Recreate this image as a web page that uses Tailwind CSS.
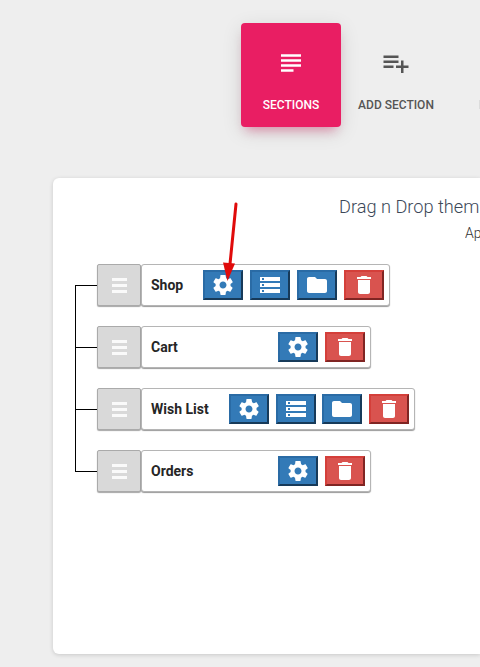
<!DOCTYPE html>
<html lang="en">
<head>
<meta charset="utf-8">
<title>Sections</title>
<script src="https://cdn.jsdelivr.net/npm/@tailwindcss/browser@4"></script>
</head>
<body class="relative h-[667px] w-[480px] overflow-hidden bg-[#eeeeee] font-['Roboto',sans-serif] text-[#262626]">
<svg class="hidden">
  <symbol id="gear" viewBox="0 0 24 24"><path d="M19.500 12.940c.04-.3.060-.610.060-.940 0-.320-.020-.640-.070-.940l2.030-1.580c.18-.14.230-.410.120-.610l-1.920-3.320c-.12-.22-.370-.290-.590-.220l-2.390.960c-.5-.38-1.030-.7-1.620-.94L14.600 2.410c-.04-.24-.240-.410-.480-.410h-4.240c-.24 0-.430.170-.470.410l-.36 2.940c-.59.240-1.130.570-1.620.940l-2.390-.96c-.22-.08-.470 0-.590.220L2.540 8.870c-.12.210-.080.470.120.610l2.030 1.580c-.05.300-.090.630-.090.940s.020.640.070.940l-2.030 1.580c-.18.140-.230.410-.120.610l1.920 3.320c.12.220.370.290.590.220l2.390-.96c.5.380 1.030.700 1.620.940l.36 2.940c.05.240.240.410.480.410h4.240c.24 0 .440-.170.470-.410l.36-2.940c.59-.24 1.130-.56 1.620-.94l2.390.96c.22.080.470 0 .590-.22l1.920-3.320c.12-.22.070-.470-.12-.61l-1.850-1.580zM12 15.500c-1.930 0-3.500-1.570-3.500-3.500s1.570-3.500 3.500-3.500 3.500 1.570 3.500 3.500-1.570 3.500-3.500 3.500z"/></symbol>
  <symbol id="storage" viewBox="0 0 24 24"><path d="M2 20h20v-4H2v4zm2-3h2v2H4v-2zM2 4v4h20V4H2zm4 3H4V5h2v2zm-4 7h20v-4H2v4zm2-3h2v2H4v-2z"/></symbol>
  <symbol id="folder" viewBox="0 0 24 24"><path d="M10 4H4c-1.1 0-1.99.9-1.99 2L2 18c0 1.100.9 2 2 2h16c1.100 0 2-.9 2-2V8c0-1.100-.9-2-2-2h-8l-2-2z"/></symbol>
  <symbol id="trash" viewBox="0 0 24 24"><path d="M6 19c0 1.100.9 2 2 2h8c1.100 0 2-.9 2-2V7H6v12zM19 4h-3.500l-1-1h-5l-1 1H5v2h14V4z"/></symbol>
  <symbol id="bars" viewBox="0 0 15 15"><path d="M0 0h15v3H0zM0 6h15v3H0zM0 12h15v3H0z"/></symbol>
</svg>

<nav class="ml-[241px] flex w-[239px] pt-[23px] text-[12px] leading-[14px] font-medium whitespace-nowrap">
  <div class="flex h-[104px] w-[100px] shrink-0 flex-col items-center rounded-[4px] bg-[#e91e63] pt-[25px] text-white shadow-[0_5px_20px_rgba(0,0,0,0.12),0_8px_10px_-5px_rgba(233,30,99,0.4)]">
    <svg class="h-[30px] w-[30px] fill-current" viewBox="0 0 24 24"><path d="M14 17H4v2h10v-2zm6-8H4v2h16V9zM4 15h16v-2H4v2zM4 5v2h16V5H4z"/></svg>
    <span class="mt-5">SECTIONS</span>
  </div>
  <div class="ml-[5px] flex h-[104px] w-[100px] shrink-0 flex-col items-center pt-[25px] text-[#555]">
    <svg class="h-[30px] w-[30px] fill-current" viewBox="0 0 24 24"><path d="M14 10H2v2h12v-2zm0-4H2v2h12V6zm4 8v-4h-2v4h-4v2h4v4h2v-4h4v-2h-4zM2 16h8v-2H2v2z"/></svg>
    <span class="mt-5">ADD SECTION</span>
  </div>
  <div class="mt-[77px] ml-auto h-[9px] w-px bg-[#dcdcdc]"></div>
</nav>

<main class="mt-[51px] ml-[53px] h-[476px] w-[427px] rounded-l-[6px] bg-white pt-[18px] shadow-[0_1px_4px_rgba(0,0,0,0.16)]">
  <h1 class="ml-[286px] w-[141px] overflow-hidden text-[18.2px] leading-[22px] font-light whitespace-nowrap text-[#3c4858]">Drag n Drop them</h1>
  <p class="mt-[5px] ml-[412px] w-[15px] overflow-hidden text-[14px] leading-[20px] font-light whitespace-nowrap text-[#333]">Ap</p>

  <div class="mt-[21px] ml-[22px] flex">
    <div class="mt-[21px] h-[187px] w-[22px] border-y border-l border-black pt-[61px]">
      <div class="h-[63px] border-y border-black"></div>
    </div>
    <ul class="flex flex-col gap-5 text-[14px] font-bold">
      <li class="flex h-[42px]">
        <span class="flex w-[44px] items-center justify-center rounded-[2px] border border-[#aaa] bg-[#d9d9d9] pt-px shadow-[0_1px_1px_rgba(0,0,0,0.35)]"><svg class="h-[15px] w-[15px] fill-[#fafafa]"><use href="#bars"/></svg></span>
        <div class="flex w-[249px] items-center justify-between rounded-[3px] border border-[#b5b5b5] bg-white pr-[5px] pl-[9px] shadow-[0_1px_1px_rgba(0,0,0,0.4)]">
          <span>Shop</span>
          <div class="flex gap-[7px] fill-white">
            <span class="flex h-[30px] w-10 items-center justify-center border-2 border-t-[#2a6ba5] border-r-[#173a59] border-b-[#173a59] border-l-[#2a6ba5] bg-[#337ab7]"><svg class="h-6 w-6"><use href="#gear"/></svg></span>
            <span class="flex h-[30px] w-10 items-center justify-center border-2 border-t-[#2a6ba5] border-r-[#173a59] border-b-[#173a59] border-l-[#2a6ba5] bg-[#337ab7]"><svg class="h-6 w-6"><use href="#storage"/></svg></span>
            <span class="flex h-[30px] w-10 items-center justify-center border-2 border-t-[#2a6ba5] border-r-[#173a59] border-b-[#173a59] border-l-[#2a6ba5] bg-[#337ab7]"><svg class="h-6 w-6"><use href="#folder"/></svg></span>
            <span class="flex h-[30px] w-10 items-center justify-center border-2 border-t-[#d43f3a] border-r-[#802523] border-b-[#802523] border-l-[#d43f3a] bg-[#d9534f]"><svg class="h-6 w-6"><use href="#trash"/></svg></span>
          </div>
        </div>
      </li>
      <li class="flex h-[42px]">
        <span class="flex w-[44px] items-center justify-center rounded-[2px] border border-[#aaa] bg-[#d9d9d9] pt-px shadow-[0_1px_1px_rgba(0,0,0,0.35)]"><svg class="h-[15px] w-[15px] fill-[#fafafa]"><use href="#bars"/></svg></span>
        <div class="flex w-[230px] items-center justify-between rounded-[3px] border border-[#b5b5b5] bg-white pr-[5px] pl-[9px] shadow-[0_1px_1px_rgba(0,0,0,0.4)]">
          <span>Cart</span>
          <div class="flex gap-[7px] fill-white">
            <span class="flex h-[30px] w-10 items-center justify-center border-2 border-t-[#2a6ba5] border-r-[#173a59] border-b-[#173a59] border-l-[#2a6ba5] bg-[#337ab7]"><svg class="h-6 w-6"><use href="#gear"/></svg></span>
            <span class="flex h-[30px] w-10 items-center justify-center border-2 border-t-[#d43f3a] border-r-[#802523] border-b-[#802523] border-l-[#d43f3a] bg-[#d9534f]"><svg class="h-6 w-6"><use href="#trash"/></svg></span>
          </div>
        </div>
      </li>
      <li class="flex h-[42px]">
        <span class="flex w-[44px] items-center justify-center rounded-[2px] border border-[#aaa] bg-[#d9d9d9] pt-px shadow-[0_1px_1px_rgba(0,0,0,0.35)]"><svg class="h-[15px] w-[15px] fill-[#fafafa]"><use href="#bars"/></svg></span>
        <div class="flex w-[274px] items-center justify-between rounded-[3px] border border-[#b5b5b5] bg-white pr-[5px] pl-[9px] shadow-[0_1px_1px_rgba(0,0,0,0.4)]">
          <span>Wish List</span>
          <div class="flex fill-white">
            <span class="flex h-[30px] w-10 items-center justify-center border-2 border-t-[#2a6ba5] border-r-[#173a59] border-b-[#173a59] border-l-[#2a6ba5] bg-[#337ab7]"><svg class="h-6 w-6"><use href="#gear"/></svg></span>
            <span class="ml-[7px] flex h-[30px] w-10 items-center justify-center border-2 border-t-[#2a6ba5] border-r-[#173a59] border-b-[#173a59] border-l-[#2a6ba5] bg-[#337ab7]"><svg class="h-6 w-6"><use href="#storage"/></svg></span>
            <span class="ml-[6px] flex h-[30px] w-10 items-center justify-center border-2 border-t-[#2a6ba5] border-r-[#173a59] border-b-[#173a59] border-l-[#2a6ba5] bg-[#337ab7]"><svg class="h-6 w-6"><use href="#folder"/></svg></span>
            <span class="ml-[7px] flex h-[30px] w-10 items-center justify-center border-2 border-t-[#d43f3a] border-r-[#802523] border-b-[#802523] border-l-[#d43f3a] bg-[#d9534f]"><svg class="h-6 w-6"><use href="#trash"/></svg></span>
          </div>
        </div>
      </li>
      <li class="flex h-[42px]">
        <span class="flex w-[44px] items-center justify-center rounded-[2px] border border-[#aaa] bg-[#d9d9d9] pt-px shadow-[0_1px_1px_rgba(0,0,0,0.35)]"><svg class="h-[15px] w-[15px] fill-[#fafafa]"><use href="#bars"/></svg></span>
        <div class="flex w-[230px] items-center justify-between rounded-[3px] border border-[#b5b5b5] bg-white pr-[5px] pl-[9px] shadow-[0_1px_1px_rgba(0,0,0,0.4)]">
          <span>Orders</span>
          <div class="flex gap-[7px] fill-white">
            <span class="flex h-[30px] w-10 items-center justify-center border-2 border-t-[#2a6ba5] border-r-[#173a59] border-b-[#173a59] border-l-[#2a6ba5] bg-[#337ab7]"><svg class="h-6 w-6"><use href="#gear"/></svg></span>
            <span class="flex h-[30px] w-10 items-center justify-center border-2 border-t-[#d43f3a] border-r-[#802523] border-b-[#802523] border-l-[#d43f3a] bg-[#d9534f]"><svg class="h-6 w-6"><use href="#trash"/></svg></span>
          </div>
        </div>
      </li>
    </ul>
  </div>
</main>

<svg class="absolute top-[200px] left-[218px] h-[84px] w-[24px]" viewBox="0 0 24 84">
  <path d="M18 4L12 64" stroke="#e00b0b" stroke-width="3" stroke-linecap="round" fill="none"/>
  <path d="M5 62.500L17 63.500L9.500 81Z" fill="#e00b0b"/>
</svg>
</body>
</html>
